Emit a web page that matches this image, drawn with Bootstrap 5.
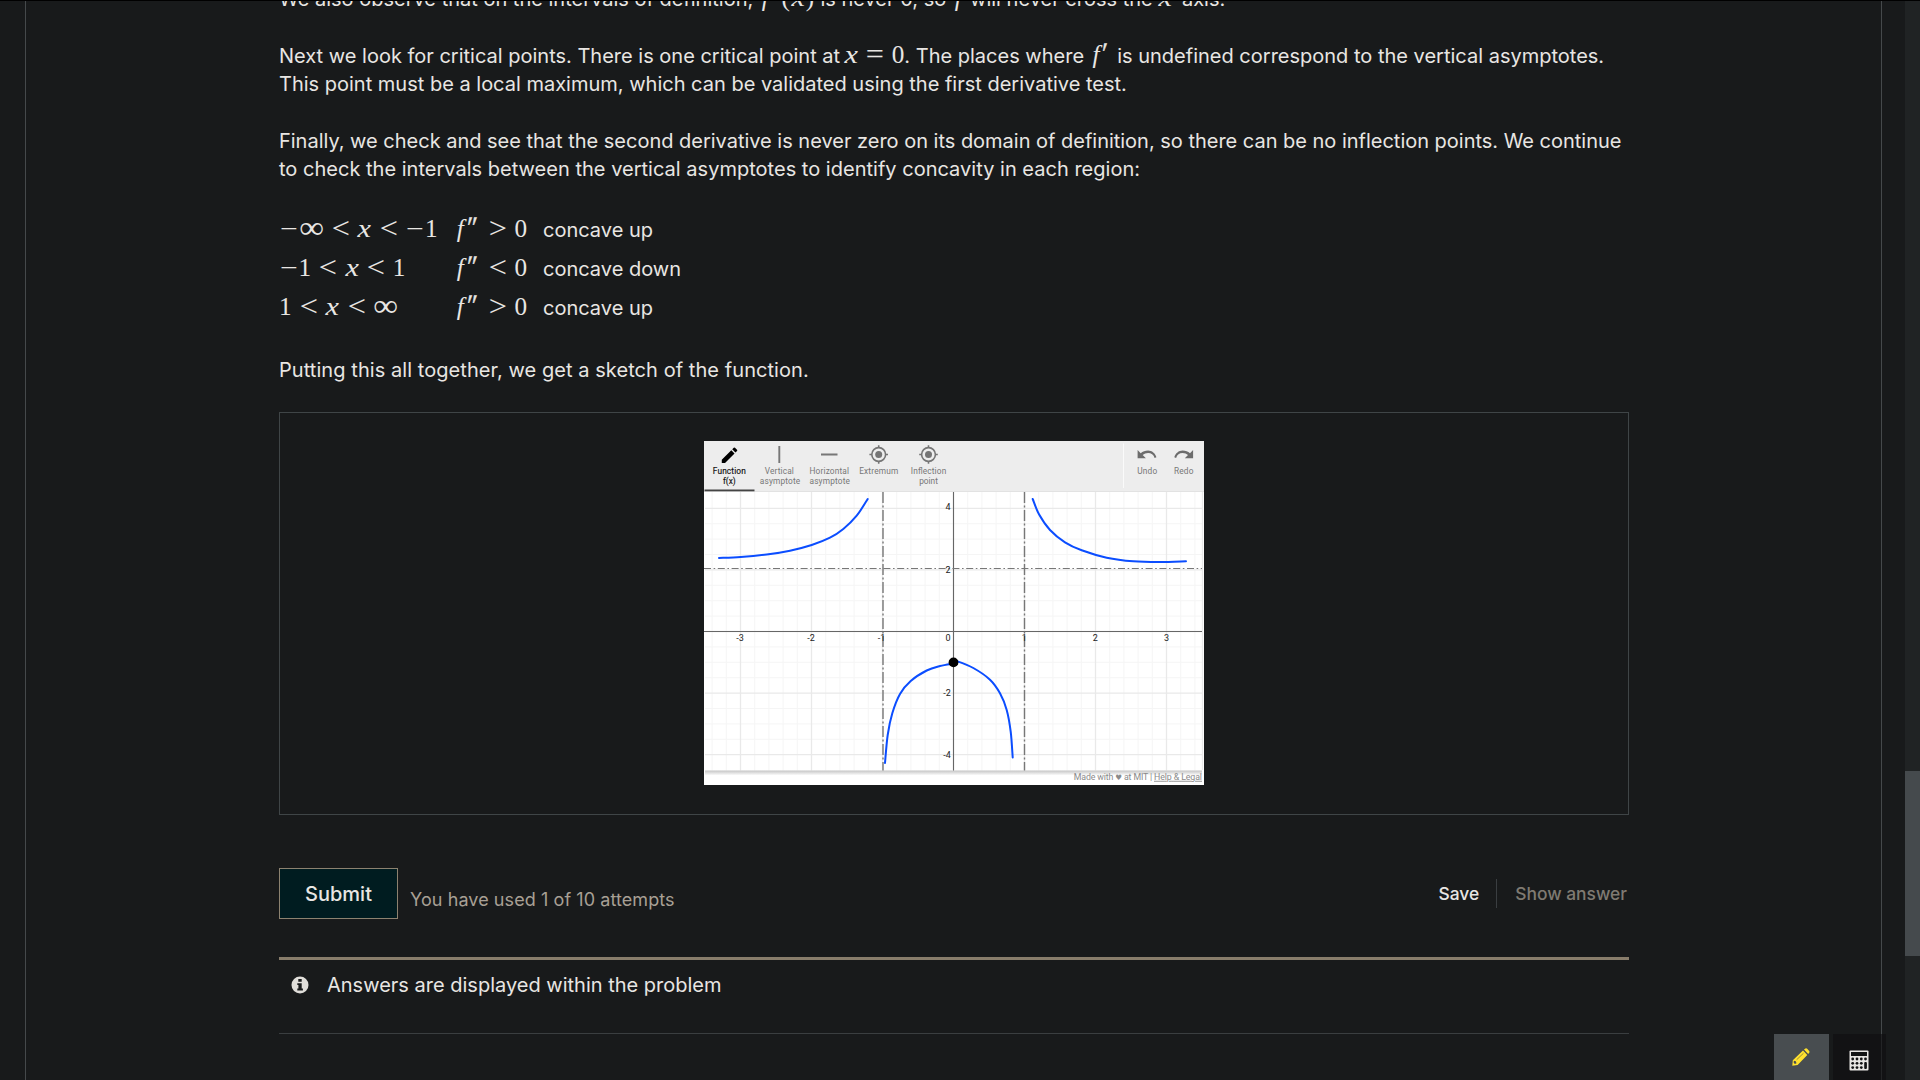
<!DOCTYPE html>
<html lang="en" data-bs-theme="dark">
<head>
<meta charset="utf-8">
<meta name="viewport" content="width=device-width, initial-scale=1">
<title>Curve sketching</title>
<link href="https://cdn.jsdelivr.net/npm/bootstrap@5.3.0/dist/css/bootstrap.min.css" rel="stylesheet">
<style>
  body { height: 1080px; background: #181a1b; color: #e8e6e3; font: 400 20px/28.33px Inter, "Liberation Sans", sans-serif; border-top: 1px solid #000; }
  .page-panel { margin-left: 25px; width: 1857px; height: 1079px; border: solid #45494b; border-width: 0 1px; padding: 0 252px 0 253px; }
  .scroll-track { width: 15px; margin-left: 23px; height: 1079px; background: #202324; padding-top: 770px; }
  .scroll-thumb { height: 185px; background: #454a4d; }
  .prose p { margin: 0 0 28.33px; white-space: nowrap; }
  .prose { margin-top: -15.6px; }
  .prose .closing { letter-spacing: .065px; margin-bottom: 27.33px; }
  .mth { font-family: "Liberation Serif", serif; font-size: 25.2px; line-height: 1; white-space: nowrap; letter-spacing: 0; }
  .mth b { font-weight: 400; display: inline-block; text-align: center; width: .5em; line-height: 1; }
  .mth .vx { font-style: italic; width: .572em; transform: scaleX(1.2); }
  .mth .vf { font-style: italic; width: .5em; }
  .mth .rel { width: .778em; margin: 0 .278em; transform-origin: 50% 58.7%; transform: scale(1.28, 1.2); }
  .mth .neg { width: .778em; transform-origin: 50% 58.7%; transform: scaleX(1.25); }
  .mth .inf { width: 1em; transform-origin: 50% 60%; transform: scale(1.38, 1.25); }
  .mth .pr { width: .37em; transform-origin: 40% 20%; transform: translate(-1.5px, -3px) scaleY(1.25) skewX(-6deg); -webkit-text-stroke: .4px currentColor; }
  .mth .pr2 { width: .57em; }
  .cases { display: grid; grid-template-columns: 175px 89px auto; line-height: 39.1px; margin-bottom: 28px; margin-top: -1.2px; }
  .sketch-box { border: 1px solid #3f4547; height: 403px; padding-top: 28px; }
  .sketch { width: 500px; height: 344px; display: block; margin: 0 auto; font-family: Roboto, sans-serif; }
  .controls { margin-top: 53px; height: 51px; }
  .btn-submit { --bs-btn-color: #e8e6e3; --bs-btn-bg: #001c20; --bs-btn-border-color: #8c8270; width: 119px; height: 51px; border-radius: 0; font-size: 20px; font-weight: 500; padding: 2px 0 0; }
  .attempts { font-size: 18px; letter-spacing: .08px; color: #a8a095; margin: 18px 0 0 12px; }
  .side-act { font-size: 17.4px; font-weight: 500; line-height: 29px; }
  .v-sep { width: 1px; height: 29px; background: #3a3e41; margin: 0 18px 0 17px; }
  .notice { margin-top: 38px; border-top: 3px solid #887d6b; border-bottom: 1px solid #3a3e40; height: 77px; padding: 11px 0 0 12px; }
  .tools { right: 34px; bottom: 0; height: 46px; }
  .tool-note { width: 55px; background: #484d50; }
  .tool-calc { width: 53px; background: rgba(14,15,16,.62); }
</style>
</head>
<body class="d-flex overflow-hidden position-relative">
<main class="page-panel flex-shrink-0">
  <div class="prose">
    <p>We also observe that on the intervals of definition, <span class="mth"><b class="vf">f</b><b class="pr">′</b><b style="width:.389em">(</b><b class="vx">x</b><b style="width:.389em">)</b></span> is never 0, so <span class="mth"><b class="vf">f</b></span> will never cross the <span class="mth"><b class="vx">x</b></span>-axis.</p>
    <p>Next we look for critical points. There is one critical point at <span class="mth" style="margin-left:-2px"><b class="vx">x</b><b class="rel">=</b><b>0</b></span>. The places where <span class="mth"><b class="vf">f</b><b class="pr">′</b></span> is undefined correspond to the vertical asymptotes.<br>This point must be a local maximum, which can be validated using the first derivative test.</p>
    <p><span style="letter-spacing:-.014px">Finally, we check and see that the second derivative is never zero on its domain of definition, so there can be no inflection points. We continue</span><br><span style="letter-spacing:.015px">to check the intervals between the vertical asymptotes to identify concavity in each region:</span></p>
    <div class="cases">
      <div><span class="mth"><b class="neg">−</b><b class="inf">∞</b><b class="rel">&lt;</b><b class="vx">x</b><b class="rel">&lt;</b><b class="neg">−</b><b>1</b></span></div>
      <div><span class="mth"><b class="vf">f</b><b class="pr pr2">″</b><b class="rel">&gt;</b><b>0</b></span></div><div>concave up</div>
      <div><span class="mth"><b class="neg">−</b><b>1</b><b class="rel">&lt;</b><b class="vx">x</b><b class="rel">&lt;</b><b>1</b></span></div>
      <div><span class="mth"><b class="vf">f</b><b class="pr pr2">″</b><b class="rel">&lt;</b><b>0</b></span></div><div>concave down</div>
      <div><span class="mth"><b>1</b><b class="rel">&lt;</b><b class="vx">x</b><b class="rel">&lt;</b><b class="inf">∞</b></span></div>
      <div><span class="mth"><b class="vf">f</b><b class="pr pr2">″</b><b class="rel">&gt;</b><b>0</b></span></div><div>concave up</div>
    </div>
    <p class="closing">Putting this all together, we get a sketch of the function.</p>
  </div>

  <div class="sketch-box">
    <svg class="sketch" viewBox="0 0 500 344">
      <defs>
        <linearGradient id="shade" x1="0" y1="0" x2="0" y2="1"><stop offset="0" stop-color="#c4c4c4"/><stop offset="1" stop-color="#fff"/></linearGradient>
      </defs>
      <rect width="500" height="344" fill="#fff"/>
      <g id="grid"></g>
      <rect x="1" y="329.5" width="497" height="5" fill="url(#shade)"/>
      <g stroke="#777" stroke-width="1.4" fill="none">
        <path d="M0 190.5H498M249.5 51V329.5" stroke="#666" stroke-width="1.1"/>
        <path d="M0 127.5H498" stroke-dasharray="7 2.6 1.6 2.6" stroke-width="1.2"/>
        <path d="M179 51V329.5M320.5 51V329.5" stroke-dasharray="11 2.6 1.8 2.6"/>
      </g>
      <g id="curves" fill="none" stroke="#0b4dff" stroke-width="2" stroke-linecap="round"></g>
      <circle cx="249.5" cy="221.4" r="4.9" fill="#000"/>
      <g font-size="9" font-weight="400" fill="#222" text-anchor="middle">
        <text x="36" y="200">-3</text><text x="107" y="200">-2</text><text x="177.5" y="200">-1</text><text x="244" y="200">0</text><text x="320.3" y="200">1</text><text x="391.3" y="200">2</text><text x="462.5" y="200">3</text>
        <text x="244" y="69.3">4</text><text x="244" y="131.6">2</text><text x="243" y="255">-2</text><text x="243" y="317.2">-4</text>
      </g>
      <rect width="500" height="51" fill="#ededed"/>
      <path d="M0 50.5H500" stroke="#e2e2e2"/>
      <rect x="0.5" y="48.5" width="50" height="1.8" fill="#444"/>
      <path d="M419.5 2.5V47" stroke="#fafafa"/>
      <g font-size="8.3" fill="#777" text-anchor="middle">
        <g fill="#111" stroke="#111" stroke-width=".15"><text x="25.3" y="33.3" textLength="33">Function</text><text x="25.3" y="43.3">f(x)</text></g>
        <text x="75.3" y="33.3" textLength="29">Vertical</text><text x="76" y="43.3" textLength="40.5">asymptote</text>
        <text x="125.3" y="33.3" textLength="39.5">Horizontal</text><text x="125.7" y="43.3" textLength="40.5">asymptote</text>
        <text x="174.7" y="33.3" textLength="39">Extremum</text>
        <text x="224.5" y="33.3" textLength="35.5">Inflection</text><text x="224.5" y="43.3">point</text>
        <text x="443.2" y="33.3" textLength="20">Undo</text><text x="479.7" y="33.3" textLength="19.5">Redo</text>
      </g>
      <g transform="translate(15.2,3.9) scale(.86)"><path fill="#000" d="M3 17.25V21h3.75L17.81 9.94l-3.75-3.75L3 17.25zM20.71 7.04a1 1 0 0 0 0-1.41l-2.34-2.34a1 1 0 0 0-1.41 0l-1.83 1.83 3.75 3.75 1.83-1.83z"/></g>
      <path d="M75.3 5V22M117 13.5H133.5" stroke="#777" stroke-width="1.9"/>
      <g fill="none" stroke="#757575" stroke-width="1.6">
        <g id="target"><circle cx="174.7" cy="13.5" r="6.9"/><circle cx="174.7" cy="13.5" r="3.5" fill="#757575" stroke="none"/><path d="M174.7 4.2V7M174.7 20V22.8M165.4 13.5H168M181.4 13.5H184"/></g>
        <use href="#target" x="49.8"/>
      </g>
      <g fill="#6c6c6c">
        <path id="undo" d="M434.4 9.3V17.5H442.7L439.5 14.4C441 13.2 442.8 12.4 444.9 12.4C448 12.4 450.5 14.3 451.4 17.2L453.2 16.6C452 12.7 448.8 9.9 444.9 9.9C442 9.9 439.5 10.9 437.5 12.6Z" transform="translate(-.8,-.3)"/>
        <use href="#undo" transform="translate(922.7,0) scale(-1,1)"/>
      </g>
      <g font-size="8.8" fill="#8a8a8a"><text x="369.7" y="338.8" textLength="78.5">Made with <tspan font-family="DejaVu Sans" font-size="7.5">♥</tspan> at MIT |</text><text x="450" y="338.8" textLength="48" text-decoration="underline">Help &amp; Legal</text></g>
    </svg>
  </div>

  <div class="controls d-flex">
    <button class="btn btn-submit" type="button">Submit</button>
    <div class="attempts">You have used 1 of 10 attempts</div>
    <div class="ms-auto d-flex align-items-center" style="padding-right:2px">
      <span class="side-act">Save</span><span class="v-sep"></span><span class="side-act" style="color:#7f7a72">Show answer</span>
    </div>
  </div>

  <div class="notice d-flex align-items-start">
    <svg width="18" height="18" viewBox="0 0 18 18" style="margin-top:5px"><circle cx="9" cy="9" r="8.5" fill="#e0deda"/><path fill="#181a1b" d="M7.3 3H10.7V5.8H7.3ZM6.3 7.2H10.7V12.6H11.9V14.4H6.3V12.6H7.4V9H6.3Z"/></svg>
    <span style="margin-left:18px">Answers are displayed within the problem</span>
  </div>
</main>

<div class="scroll-track flex-shrink-0"><div class="scroll-thumb"></div></div>

<div class="tools position-absolute d-flex">
  <div class="tool-note me-1 d-flex justify-content-center">
    <svg width="18" height="18" viewBox="0 0 18 18" style="margin:14px 1px 0 0"><path fill="#ffe12e" d="M.3 17.7L.8 12.2L11 2.4L15.3 6.9L5.6 16.9ZM12 1.5L13.4.5Q14.3 0 15.2.8L17.2 2.9Q17.9 3.9 17.2 4.8L16.2 5.9Z"/><path d="M4.6 11.8L11.5 5.2" stroke="#8a8140" stroke-width=".9"/><path fill="#484d50" d="M1.8 12.8L3.8 13.2L4.5 15.3L2.9 15.9L1.7 14.8Z"/></svg>
  </div>
  <div class="tool-calc d-flex justify-content-center">
    <svg width="20" height="21" viewBox="0 0 20 21" style="margin:16px 2px 0 0"><rect x=".5" y=".5" width="19" height="20" rx="1" fill="#e8e6e3"/><g fill="#121314"><rect x="2" y="2" width="16" height="4"/><circle cx="3.7" cy="9" r="1.4"/><circle cx="8" cy="9" r="1.4"/><circle cx="12.3" cy="9" r="1.4"/><circle cx="16.5" cy="9" r="1.4"/><circle cx="3.7" cy="13.3" r="1.4"/><circle cx="8" cy="13.3" r="1.4"/><circle cx="12.3" cy="13.3" r="1.4"/><circle cx="3.7" cy="17.6" r="1.4"/><circle cx="8" cy="17.6" r="1.4"/><circle cx="12.3" cy="17.6" r="1.4"/><rect x="15.2" y="12" width="2.7" height="7" rx="1"/></g></svg>
  </div>
</div>

<script src="https://cdn.jsdelivr.net/npm/bootstrap@5.3.0/dist/js/bootstrap.bundle.min.js"></script>
<script>
  // Graph paper: minor lines every 0.2 in x and 0.5 in y, major lines at integers in x and even values in y
  let minor = '', major = '';
  for (let i = -17; i <= 17; i++) {
    const s = `M${(249.5 + i * 14.2).toFixed(1)} 51V329.5`;
    if (i % 5) minor += s; else major += s;
  }
  for (let j = -8; j <= 8; j++) {
    const s = `M1 ${(190.5 - j * 15.4).toFixed(1)}H498`;
    if (j % 4) minor += s; else major += s;
  }
  grid.innerHTML = `<path d="${minor}" stroke="#f5f5f5"/><path d="${major}M498.5 51V329" stroke="#e9e9e9" stroke-width="1.3"/>`;

  // Hand-drawn branches, smoothed through their sample points
  const branches = [
    [[15,117],[36.7,116],[62.7,113.5],[86,109.7],[107.7,104],[126,96.7],[139.3,88],[152.7,74.7],[163.7,58]],
    [[328.7,58],[335,73.3],[346,89],[361,101.3],[377.7,109.3],[402.7,116.7],[429.3,120.3],[456,121],[482,120.3]],
    [[181,322],[183.7,294],[188.3,272.3],[196,253],[206.7,240],[222.7,229.5],[236,225],[249.3,222.5]],
    [[249.3,220],[253,220.2],[269.3,227],[286,238.7],[296,252.3],[302.7,269],[306.7,290.7],[308.7,316.5]]
  ];
  curves.innerHTML = branches.map(p => {
    let d = 'M' + p[0];
    for (let i = 0; i < p.length - 1; i++) {
      const a = p[i - 1] || p[i], b = p[i], c = p[i + 1], e = p[i + 2] || c;
      d += `C${b[0] + (c[0] - a[0]) / 6} ${b[1] + (c[1] - a[1]) / 6} ${c[0] - (e[0] - b[0]) / 6} ${c[1] - (e[1] - b[1]) / 6} ${c[0]} ${c[1]}`;
    }
    return `<path d="${d}"/>`;
  }).join('');
</script>
</body>
</html>
